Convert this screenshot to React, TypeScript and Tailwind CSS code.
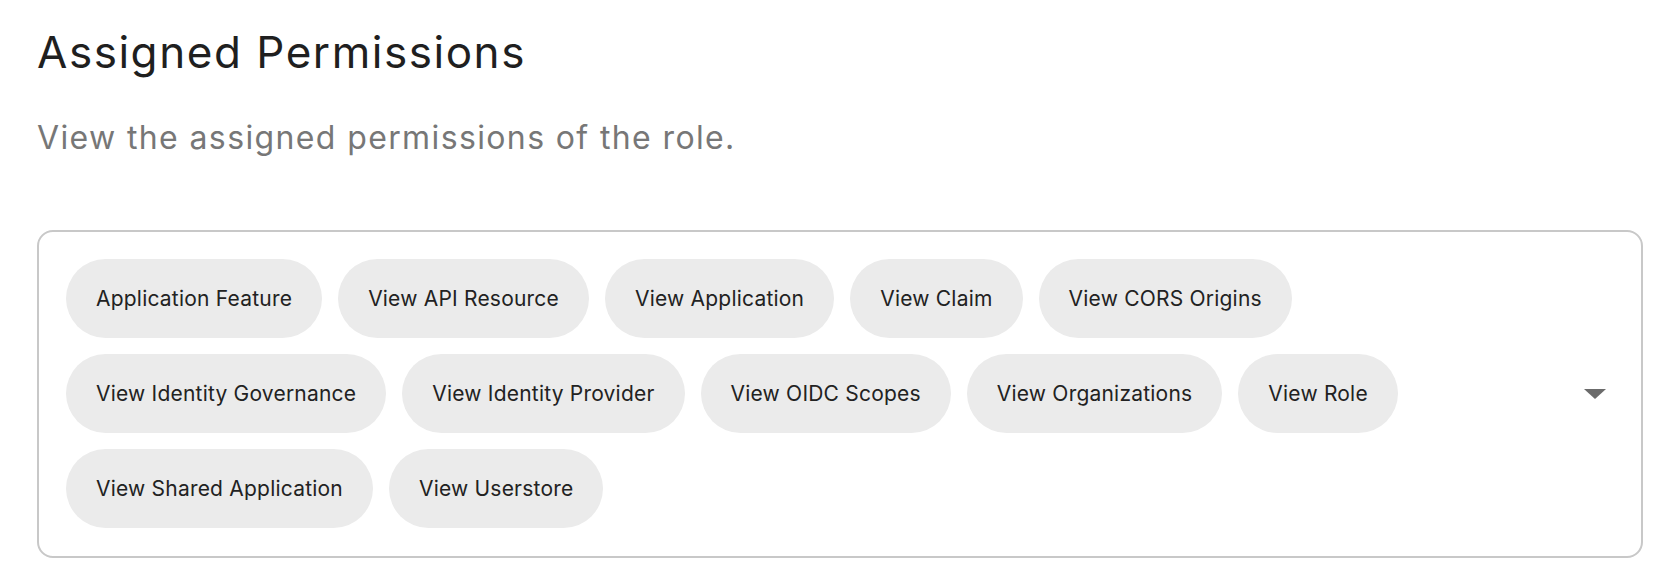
const rows = [
  "Application Feature",
  "View API Resource",
  "View Application",
  "View Claim",
  "View CORS Origins",
  "View Identity Governance",
  "View Identity Provider",
  "View OIDC Scopes",
  "View Organizations",
  "View Role",
  "View Shared Application",
  "View Userstore",
];

export default function App() {
  return (
    <div className="min-h-screen bg-white pl-[37px] pr-[19px] pt-[30px] font-['Inter',sans-serif]">
      <h1 className="text-[44px] leading-none font-normal text-[#1f1f1f] tracking-[0.035em]">
        Assigned Permissions
      </h1>
      <p className="mt-[48px] text-[32px] leading-none text-[#777777] tracking-[0.043em]">
        View the assigned permissions of the role.
      </p>

      <div className="mt-[76px] flex items-center rounded-[16px] border-2 border-[#c8c8c8] px-[27px] pt-[27px] pb-[28px]">
        <div className="flex flex-1 flex-wrap gap-[16px] pr-[100px]">
          {rows.map((label) => (
            <span
              key={label}
              className="flex h-[79px] items-center rounded-full bg-[#ebebeb] px-[30px] text-[21px] tracking-[0.01em] text-[#222222]"
            >
              {label}
            </span>
          ))}
        </div>
        <svg width="22" height="10" viewBox="0 0 22 10" className="mr-[8px] shrink-0">
          <path d="M0 0 H22 L11 10 Z" fill="#6b6b6b" />
        </svg>
      </div>
    </div>
  );
}
